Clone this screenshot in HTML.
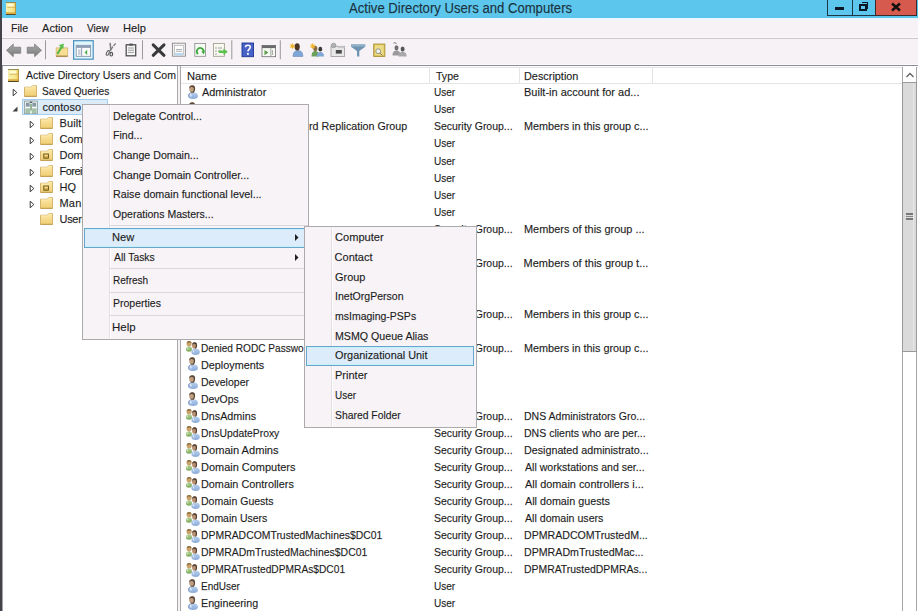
<!DOCTYPE html>
<html><head><meta charset="utf-8">
<style>
*{margin:0;padding:0;box-sizing:border-box}
html,body{width:918px;height:611px;overflow:hidden;background:#fff}
body{position:relative;font-family:"Liberation Sans",sans-serif;font-size:11px;color:#1e1e1e}
.a{position:absolute}
.t{position:absolute;white-space:nowrap;line-height:13px;transform-origin:0 50%;-webkit-text-stroke:0.25px rgba(20,20,20,0.5)}
svg.a{overflow:visible}
</style></head><body>
<svg width="0" height="0" style="position:absolute">
<defs>
<linearGradient id="gFold" x1="0" y1="0" x2="0" y2="1"><stop offset="0" stop-color="#fbe7a6"/><stop offset="1" stop-color="#f1cf74"/></linearGradient>
<linearGradient id="gRoot" x1="0" y1="0" x2="1" y2="0"><stop offset="0" stop-color="#f6f0b2"/><stop offset="0.6" stop-color="#f8e890"/><stop offset="1" stop-color="#f2cc60"/></linearGradient>
<linearGradient id="gGold" x1="0" y1="0" x2="0" y2="1"><stop offset="0" stop-color="#f6e9a0"/><stop offset="0.6" stop-color="#e3c663"/><stop offset="1" stop-color="#b89535"/></linearGradient>
<linearGradient id="gBlue" x1="0" y1="0" x2="0" y2="1"><stop offset="0" stop-color="#b8d0ee"/><stop offset="1" stop-color="#8aaad8"/></linearGradient>
<linearGradient id="gGreen" x1="0" y1="0" x2="0" y2="1"><stop offset="0" stop-color="#b4d296"/><stop offset="1" stop-color="#7aa65a"/></linearGradient>
<symbol id="user" viewBox="0 0 10 14">
 <path d="M0 11 C0 8.6 1.8 7.2 5 7.2 C8.2 7.2 10 8.6 10 11 C10 13 8.2 14 5 14 C1.8 14 0 13 0 11Z" fill="url(#gBlue)"/>
 <path d="M2.4 9 L3.2 11.5" stroke="#f0f6ff" stroke-width="1.1"/>
 <path d="M0.6 11.5 C0.5 9.8 1.2 8.6 2.2 8" fill="none" stroke="#7a88b8" stroke-width="0.8"/>
 <ellipse cx="4.1" cy="3.8" rx="3" ry="3.6" fill="#c0a080"/>
 <path d="M1.2 3.2 C1.2 0.9 2.6 0.2 4.2 0.2 C6.1 0.2 7.2 1.2 7.1 3.8 C7 5.6 6.6 7 5.4 7.6 L4.6 7.6 C5.6 6.2 6 4.8 5.6 3 C5 2 3.6 1.8 2.6 2.2 C2 2.4 1.5 2.8 1.2 3.2Z" fill="#5c4a3e"/>
 <path d="M2.6 7.2 L5.8 7.2" stroke="#4a3e36" stroke-width="0.9"/>
</symbol>
<symbol id="group" viewBox="0 0 15 14">
 <path d="M0 8.6 C0 6.4 1.2 5.3 3 5.3 C4.8 5.3 6 6.4 6 8.6 C6 10 5 10.8 3 10.8 C1 10.8 0 10 0 8.6Z" fill="url(#gGreen)"/>
 <path d="M1.3 6.5 L1.8 8.5" stroke="#e8f4d8" stroke-width="0.8"/>
 <ellipse cx="3.1" cy="2.8" rx="2.5" ry="2.7" fill="#c8a46c"/>
 <path d="M0.8 2.4 C0.8 0.8 1.8 0.1 3.1 0.1 C4.6 0.1 5.5 0.9 5.5 2.6 C5.2 1.6 4.4 1.3 3.2 1.4 C2 1.5 1.2 1.8 0.8 2.4Z" fill="#8a6a3c"/>
 <path d="M5.3 11 C5.3 8.8 7 7.6 9.6 7.6 C12.2 7.6 13.9 8.8 13.9 11 C13.9 13 12.2 14 9.6 14 C7 14 5.3 13 5.3 11Z" fill="url(#gBlue)"/>
 <path d="M7.2 9.3 L7.8 11.5" stroke="#f0f6ff" stroke-width="0.9"/>
 <ellipse cx="8.6" cy="4.5" rx="2.5" ry="3.2" fill="#b89070"/>
 <path d="M6.1 4 C6.1 2 7.2 1.2 8.6 1.2 C10.1 1.2 11.1 2.1 11 4.4 C10.9 5.8 10.6 7 9.6 7.6 L9 7.6 C9.8 6.4 10 5 9.7 3.6 C9.2 2.8 8.2 2.7 7.4 3 C6.8 3.3 6.4 3.6 6.1 4Z" fill="#4e3e34"/>
</symbol>
<symbol id="folder" viewBox="0 0 13 12">
 <path d="M0.5 2.2 L6.5 2.2 C7.6 2.2 8.2 0.6 9.3 0.6 L12.5 0.6 L12.5 11.5 L0.5 11.5 Z" fill="url(#gFold)" stroke="#cfae62" stroke-width="0.9"/>
 <path d="M1 2.9 L6.8 2.9 C7.9 2.9 8.5 1.3 9.6 1.3 L12 1.3" fill="none" stroke="#fff2c4" stroke-width="0.8"/>
 <rect x="0.5" y="10.8" width="12" height="0.8" fill="#b8964e"/>
</symbol>
<symbol id="oufolder" viewBox="0 0 13 12">
 <path d="M0.5 2.2 L6.5 2.2 C7.6 2.2 8.2 0.6 9.3 0.6 L12.5 0.6 L12.5 11.5 L0.5 11.5 Z" fill="url(#gFold)" stroke="#cfae62" stroke-width="0.9"/>
 <path d="M1 2.9 L6.8 2.9 C7.9 2.9 8.5 1.3 9.6 1.3 L12 1.3" fill="none" stroke="#fff2c4" stroke-width="0.8"/>
 <rect x="0.5" y="10.8" width="12" height="0.8" fill="#b8964e"/>
 <rect x="3.8" y="5" width="4.6" height="4.2" fill="#d4ac48" stroke="#5a4410" stroke-width="0.8"/>
 <rect x="4.6" y="5.8" width="3" height="1.2" fill="#f8e6a8"/>
</symbol>
<symbol id="tri" viewBox="0 0 6 9">
 <path d="M1.2 1.2 L4.8 4.5 L1.2 7.8 Z" fill="none" stroke="#3a3a3a" stroke-width="1"/>
</symbol>
<symbol id="trix" viewBox="0 0 6 6">
 <path d="M5.5 0.5 L5.5 5.5 L0.5 5.5 Z" fill="#404040"/>
</symbol>
<symbol id="domain" viewBox="0 0 14 14">
 <rect x="0.5" y="1" width="13" height="12.6" fill="#dfe9e2" stroke="#8a9ca4" stroke-width="0.8"/>
 <rect x="2" y="2.8" width="3.6" height="4" fill="#8797a6"/>
 <rect x="8.4" y="2.8" width="3.6" height="4" fill="#8797a6"/>
 <rect x="1.5" y="6.8" width="4.5" height="1.2" fill="#ffffff"/>
 <rect x="8" y="6.8" width="4.5" height="1.2" fill="#ffffff"/>
 <rect x="1.5" y="8.4" width="4.5" height="4.6" fill="#a6c2a8"/>
 <rect x="8" y="8.4" width="4.5" height="4.6" fill="#a6c2a8"/>
 <rect x="6.2" y="4" width="1.6" height="8" fill="#84a886"/>
 <rect x="6.2" y="10.5" width="1.6" height="3" fill="#e8f8e8"/>
 <rect x="5.8" y="1.6" width="2.4" height="1.4" fill="#4a5c6a"/>
</symbol>
<symbol id="root" viewBox="0 0 10 13" preserveAspectRatio="none">
 <rect x="0" y="0.3" width="10" height="12.4" fill="url(#gRoot)"/>
 <rect x="0" y="0" width="10" height="0.9" fill="#8c8446"/>
 <rect x="1.6" y="1.8" width="6" height="2.8" fill="#fffbd2"/>
 <rect x="1.2" y="4.8" width="7.8" height="0.8" fill="#cfae50"/>
 <rect x="0" y="10.2" width="10" height="1.8" fill="#dcae44"/>
 <rect x="0" y="12" width="10" height="1" fill="#4c4a22"/>
 <rect x="9" y="0.5" width="1" height="12" fill="#b89a40"/>
</symbol>
</defs></svg>
<div class="a" style="left:0px;top:0px;width:2px;height:611px;background:#434349"></div><div class="a" style="left:2px;top:0px;width:916px;height:18px;background:#5cc6ec"></div><svg class="a" style="left:6px;top:2px" width="10" height="13" viewBox="0 0 10 13"><use href="#root"/></svg><div class="t" style="left:349.00px;top:0px;font-size:14px;transform:scale(0.9370,1.0);font-size:14px;line-height:16px;color:#1d3646">Active Directory Users and Computers</div><div class="a" style="left:827px;top:0px;width:26px;height:16px;border:1px solid #1d3646;border-top:none;border-right:none"></div><div class="a" style="left:852px;top:0px;width:24px;height:16px;border:1px solid #1d3646;border-top:none;border-right:none"></div><div class="a" style="left:875px;top:0px;width:42px;height:16px;background:#d65a4e;border:1px solid #3a2a2a;border-top:none"></div><div class="a" style="left:835px;top:7px;width:9px;height:3px;background:#0b1826"></div><div class="a" style="left:859px;top:4px;width:8px;height:7px;border:2px solid #0b1826"></div><div class="a" style="left:862px;top:2px;width:6px;height:1px;background:#0b1826"></div><div class="a" style="left:867px;top:2px;width:1px;height:7px;background:#0b1826"></div><svg class="a" style="left:891px;top:3px" width="10" height="8"><path d="M1 0.5 L9 7.5 M9 0.5 L1 7.5" stroke="#111" stroke-width="2.4"/></svg><div class="a" style="left:2px;top:18px;width:916px;height:47px;background:#f6f2f6"></div><div class="a" style="left:2px;top:18px;width:916px;height:4px;background:linear-gradient(#e8f6fc,#f4f4fa 60%,#f7f2f5)"></div><div class="a" style="left:2px;top:37px;width:916px;height:1px;background:#fbf9fb"></div><div class="a" style="left:2px;top:38px;width:916px;height:1px;background:#cac6cc"></div><div class="t" style="left:10.84px;top:22px;font-size:11px;transform:scale(0.9625,1.0);">File</div><div class="t" style="left:42.00px;top:22px;font-size:11px;transform:scale(1.0100,1.0);">Action</div><div class="t" style="left:87.20px;top:22px;font-size:11px;transform:scale(0.9250,1.0);">View</div><div class="t" style="left:123.19px;top:22px;font-size:11px;transform:scale(1.0143,1.0);">Help</div><div class="a" style="left:2px;top:64px;width:916px;height:1px;background:#fdfcfd"></div><div class="a" style="left:2px;top:65px;width:916px;height:1px;background:#8e8c96"></div><svg class="a" style="left:0;top:38px" width="420" height="26" viewBox="0 38 420 26">
<defs>
<linearGradient id="gArr" x1="0" y1="0" x2="0" y2="1"><stop offset="0" stop-color="#a8a8a8"/><stop offset="1" stop-color="#7c7c7c"/></linearGradient>
</defs>
<!-- back -->
<path d="M6.5 50.3 L13.3 44 L13.3 47.2 L20.7 47.2 L20.7 53.3 L13.3 53.3 L13.3 56.7 Z" fill="url(#gArr)" stroke="#777" stroke-width="0.7" stroke-linejoin="round"/>
<!-- forward -->
<path d="M41.5 50.3 L34.6 44 L34.6 47.2 L27.2 47.2 L27.2 53.3 L34.6 53.3 L34.6 56.7 Z" fill="url(#gArr)" stroke="#777" stroke-width="0.7" stroke-linejoin="round"/>
<rect x="45" y="40.3" width="1" height="19" fill="#9a9a9a"/>
<!-- up folder -->
<path d="M56.2 47.8 L67.6 47.8 L67.6 56.6 L56.2 56.6 Z" fill="#f7de90" stroke="#c8a45a" stroke-width="0.6"/>
<rect x="56.2" y="55.6" width="11.4" height="1.1" fill="#9a7a40"/>
<path d="M57.8 53.2 L61.6 47" fill="none" stroke="#5ab84a" stroke-width="2.2" stroke-linecap="round"/>
<path d="M58.6 45.2 L63.8 43.6 L63.4 49 Z" fill="#5cc050"/>
<!-- highlighted button -->
<rect x="73.6" y="40.7" width="19.6" height="18.5" fill="#e0f6fd" stroke="#4a90bc" stroke-width="1.2"/>
<rect x="76.2" y="45.3" width="14.4" height="11" fill="#fbfbfb" stroke="#7a8ca4" stroke-width="0.8"/>
<rect x="76.2" y="45.3" width="14.4" height="2.6" fill="#8d9db3"/>
<rect x="78" y="49.5" width="2.5" height="5.5" fill="#c8d0d8"/>
<rect x="81.3" y="48" width="0.8" height="8.2" fill="#7a8ca4"/>
<path d="M87.2 49.8 L84.5 52.4 L87.2 55 Z" fill="#4cae4c"/>
<!-- scissors -->
<path d="M110.1 42.8 L110.9 50.5" stroke="#7c7c7c" stroke-width="1.5"/>
<path d="M115.6 43.4 L109.6 51" stroke="#7c7c7c" stroke-width="1.3"/>
<circle cx="113.4" cy="46.5" r="0.7" fill="#f4f4f4"/>
<ellipse cx="107.8" cy="52.9" rx="1.2" ry="2.5" transform="rotate(25 107.8 52.9)" fill="none" stroke="#646464" stroke-width="1.1"/>
<ellipse cx="111.3" cy="54.2" rx="1.3" ry="1.8" fill="none" stroke="#555" stroke-width="1.2"/>
<!-- clipboard -->
<rect x="126.2" y="44.8" width="9.5" height="11" fill="#f4f4f4" stroke="#505050" stroke-width="1.3"/>
<rect x="129.2" y="43.6" width="3.6" height="2" fill="#505050"/>
<path d="M128 48 H134 M128 50.2 H134 M128 52.4 H134" stroke="#8a8a8a" stroke-width="0.8"/>
<rect x="142" y="40.3" width="1" height="19" fill="#9a9a9a"/>
<!-- delete X -->
<path d="M153.2 44.8 L164 55.3 M164 44.8 L153.2 55.3" stroke="#3a3a3a" stroke-width="3" stroke-linecap="round"/>
<!-- properties -->
<rect x="172.4" y="43.2" width="13" height="13" fill="#f0f0f0" stroke="#8a8a8a" stroke-width="0.9"/>
<rect x="174.5" y="45.5" width="8.8" height="8.8" fill="#fdfdfd" stroke="#b0b0b0" stroke-width="0.7"/>
<path d="M176 49.5 H182 M176 51.3 H182" stroke="#909090" stroke-width="0.7"/>
<rect x="175" y="53" width="8" height="2.5" fill="#bcd8ee"/>
<!-- refresh -->
<rect x="194.8" y="43.5" width="10.8" height="12.8" fill="#f6fbf4" stroke="#8a8a8a" stroke-width="0.8"/>
<path d="M198 54 A3.4 3.4 0 1 1 203.2 53" fill="none" stroke="#3aa83a" stroke-width="1.7"/>
<path d="M201.4 51.5 L204.5 50.8 L204 54.5 Z" fill="#3aa83a"/>
<!-- export -->
<rect x="213.4" y="43.5" width="11" height="12.8" fill="#f8f8f0" stroke="#9a9a8a" stroke-width="0.8"/>
<path d="M215.5 48 h1 M215.5 51 h1 M215.5 54 h1" stroke="#555" stroke-width="1"/>
<path d="M218 48 H222 M218 51 H221" stroke="#888" stroke-width="0.8"/>
<path d="M218.8 50.4 H223.5 V48.5 L227.8 51.7 L223.5 54.9 V53 H218.8 Z" fill="#5cc04c"/>
<rect x="231.3" y="40.3" width="1" height="19" fill="#9a9a9a"/>
<!-- help -->
<rect x="242" y="43" width="11.5" height="13.7" fill="#4862c8" stroke="#1e3490" stroke-width="0.9"/>
<path d="M245.5 47.2 C245.5 44.5 250.3 44.5 250.3 47.2 C250.3 49 247.9 49.3 247.9 51.6" fill="none" stroke="#fff" stroke-width="1.5"/>
<rect x="247" y="53" width="1.8" height="1.8" fill="#fff"/>
<!-- console -->
<rect x="262" y="45.4" width="13.6" height="11.3" fill="#f6faf2" stroke="#6e6e6e" stroke-width="0.8"/>
<rect x="262" y="45.4" width="13.6" height="2.7" fill="#6a6a6a"/>
<path d="M264.5 50 L268.3 52.6 L264.5 55.2 Z" fill="#5a9a4a"/>
<rect x="270.5" y="48.3" width="0.8" height="8" fill="#8a8a8a"/>
<path d="M272.5 50 V55" stroke="#999" stroke-width="0.8"/>
<rect x="279.8" y="40.3" width="1" height="19" fill="#9a9a9a"/>
<!-- new user -->
<path d="M293 56.5 C293 52.5 295 50.5 298 50.5 C301 50.5 303 52.5 302.8 56.5 Z" fill="#7ea6d6" stroke="#5a7fae" stroke-width="0.5"/>
<ellipse cx="297.2" cy="46.8" rx="2.6" ry="3.6" fill="#4a3424"/>
<path d="M292.3 42.8 L293 45 L295.2 44.2 L293.8 46 L295.5 47.6 L293.2 47.4 L292.6 49.5 L291.6 47.4 L289.6 47.8 L291 46 L289.6 44.3 L291.6 44.8 Z" fill="#f4b428"/>
<!-- new group -->
<path d="M311.5 56.5 C311.5 52.8 313 51 315.3 51 C317.6 51 319.2 52.8 319 56.5 Z" fill="#6aa05a"/>
<ellipse cx="315.3" cy="48.5" rx="2" ry="2.8" fill="#8a6a40"/>
<path d="M316.6 56.6 C316.6 53.5 318 52 320.3 52 C322.6 52 324.2 53.5 324 56.6 Z" fill="#7ea6d6"/>
<ellipse cx="320.3" cy="49.2" rx="1.9" ry="2.4" fill="#3a3a34"/>
<path d="M312.6 42.8 L313.3 45 L315.5 44.2 L314.1 46 L315.8 47.6 L313.5 47.4 L312.9 49.5 L311.9 47.4 L309.9 47.8 L311.3 46 L309.9 44.3 L311.9 44.8 Z" fill="#f4b428"/>
<!-- new OU -->
<rect x="331" y="46.3" width="13.6" height="10.2" fill="#e8e8e8" stroke="#9a9a9a" stroke-width="0.8"/>
<rect x="335.8" y="50" width="6" height="3.6" fill="#4a4a4a"/>
<rect x="338" y="46.3" width="6.6" height="1.8" fill="#c8c8c8"/>
<circle cx="333.6" cy="45.5" r="2.3" fill="#b0b0b0" stroke="#8a8a8a" stroke-width="0.6"/>
<!-- filter -->
<path d="M351 44.4 H365.2 V46.8 L359.3 51 V56.5 H357 V51 L351 46.8 Z" fill="#6f94b2"/>
<rect x="351" y="44.4" width="14.2" height="2.2" fill="#8fb0c8"/>
<!-- find -->
<rect x="373.7" y="44" width="11.2" height="12.5" fill="#dcc15a" stroke="#a48a2a" stroke-width="0.8"/>
<rect x="375" y="45.2" width="8.6" height="10" fill="#eedc88"/>
<circle cx="378.2" cy="51.2" r="2.4" fill="#f4f4f4" stroke="#8a8a7a" stroke-width="0.9"/>
<path d="M380 53 L382.5 55.5" stroke="#7a7a6a" stroke-width="1"/>
<!-- add to group -->
<path d="M392.5 55.5 C392.5 52 394 50.5 396.5 50.5 C399 50.5 400.5 52 400.3 55.5 Z" fill="#9a9a9a"/>
<ellipse cx="396.5" cy="47.8" rx="2" ry="2.6" fill="#707070"/>
<path d="M398.5 56.5 C398.5 53.3 400 51.8 402.6 51.8 C405.2 51.8 406.7 53.3 406.6 56.5 Z" fill="#a8a8a8"/>
<ellipse cx="402.6" cy="49" rx="2" ry="2.5" fill="#555"/>
<path d="M393.5 43 C394.5 42.5 396 42.8 396.5 44" fill="none" stroke="#777" stroke-width="1"/>
</svg><div class="a" style="left:2px;top:66px;width:1px;height:545px;background:#a4a4aa"></div><div class="a" style="left:177px;top:66px;width:1px;height:545px;background:#a9a9a9"></div><div class="a" style="left:178px;top:66px;width:2px;height:545px;background:#f5f1f5"></div><div class="a" style="left:180px;top:66px;width:1px;height:545px;background:#a9a9a9"></div><svg class="a" style="left:8px;top:69px" width="11" height="13" viewBox="0 0 11 13"><use href="#root"/></svg><div class="t" style="left:25.50px;top:69px;font-size:11px;transform:scale(0.9583,1.0);">Active Directory Users and Com</div><svg class="a" style="left:12px;top:88px" width="6" height="9" viewBox="0 0 6 9"><use href="#tri"/></svg><svg class="a" style="left:23.5px;top:85px" width="13" height="12" viewBox="0 0 13 12"><use href="#folder"/></svg><div class="t" style="left:41.88px;top:85px;font-size:11px;transform:scale(0.9239,1.0);">Saved Queries</div><div class="a" style="left:22px;top:99px;width:86px;height:16px;background:#dcebf8;border:1px solid #a5cdee"></div><svg class="a" style="left:12px;top:106px" width="6" height="6" viewBox="0 0 6 6"><use href="#trix"/></svg><svg class="a" style="left:24px;top:100px" width="14" height="14" viewBox="0 0 14 14"><use href="#domain"/></svg><div class="t" style="left:42.5px;top:101px;font-size:11px;">contoso</div><svg class="a" style="left:29px;top:120px" width="6" height="9" viewBox="0 0 6 9"><use href="#tri"/></svg><svg class="a" style="left:40px;top:117px" width="13" height="12" viewBox="0 0 13 12"><use href="#folder"/></svg><div class="t" style="left:59.5px;top:117px;font-size:11px;letter-spacing:0.1px">Built</div><svg class="a" style="left:29px;top:136px" width="6" height="9" viewBox="0 0 6 9"><use href="#tri"/></svg><svg class="a" style="left:40px;top:133px" width="13" height="12" viewBox="0 0 13 12"><use href="#folder"/></svg><div class="t" style="left:59.5px;top:133px;font-size:11px;">Com</div><svg class="a" style="left:29px;top:152px" width="6" height="9" viewBox="0 0 6 9"><use href="#tri"/></svg><svg class="a" style="left:40px;top:149px" width="13" height="12" viewBox="0 0 13 12"><use href="#oufolder"/></svg><div class="t" style="left:59.5px;top:149px;font-size:11px;">Dom</div><svg class="a" style="left:29px;top:168px" width="6" height="9" viewBox="0 0 6 9"><use href="#tri"/></svg><svg class="a" style="left:40px;top:165px" width="13" height="12" viewBox="0 0 13 12"><use href="#folder"/></svg><div class="t" style="left:59.5px;top:165px;font-size:11px;letter-spacing:-0.5px">Forei</div><svg class="a" style="left:29px;top:184px" width="6" height="9" viewBox="0 0 6 9"><use href="#tri"/></svg><svg class="a" style="left:40px;top:181px" width="13" height="12" viewBox="0 0 13 12"><use href="#oufolder"/></svg><div class="t" style="left:59.5px;top:181px;font-size:11px;">HQ</div><svg class="a" style="left:29px;top:200px" width="6" height="9" viewBox="0 0 6 9"><use href="#tri"/></svg><svg class="a" style="left:40px;top:197px" width="13" height="12" viewBox="0 0 13 12"><use href="#folder"/></svg><div class="t" style="left:59.5px;top:197px;font-size:11px;letter-spacing:0.2px">Man</div><svg class="a" style="left:40px;top:213px" width="13" height="12" viewBox="0 0 13 12"><use href="#folder"/></svg><div class="t" style="left:59.5px;top:213px;font-size:11px;letter-spacing:-0.3px">Users</div><div class="a" style="left:181px;top:66px;width:721px;height:17px;background:#fff"></div><div class="a" style="left:181px;top:67px;width:737px;height:1px;background:#e3e1e7"></div><div class="a" style="left:181px;top:83px;width:721px;height:1px;background:#e5e5e5"></div><div class="a" style="left:429px;top:67px;width:1px;height:16px;background:#e5e5e5"></div><div class="a" style="left:519px;top:67px;width:1px;height:16px;background:#e5e5e5"></div><div class="a" style="left:652px;top:67px;width:1px;height:16px;background:#e5e5e5"></div><div class="t" style="left:186.59px;top:70px;font-size:11px;transform:scale(1.0143,1.0);">Name</div><div class="t" style="left:435.60px;top:70px;font-size:11px;transform:scale(0.9609,1.0);">Type</div><div class="t" style="left:523.81px;top:70px;font-size:11px;transform:scale(0.9887,1.0);">Description</div><svg class="a" style="left:188px;top:85.0px" width="10" height="14" viewBox="0 0 10 14"><use href="#user"/></svg><div class="t" style="left:202.10px;top:86px;font-size:11px;transform:scale(0.9923,1.0);">Administrator</div><div class="t" style="left:434.29px;top:86px;font-size:11px;transform:scale(0.9136,1.0);">User</div><div class="t" style="left:523.60px;top:86px;font-size:11px;transform:scale(0.9991,1.0);">Built-in account for ad...</div><svg class="a" style="left:188px;top:102.03px" width="10" height="14" viewBox="0 0 10 14"><use href="#user"/></svg><div class="t" style="left:434.29px;top:103px;font-size:11px;transform:scale(0.9136,1.0);">User</div><svg class="a" style="left:186px;top:119.86px" width="15" height="14" viewBox="0 0 15 14"><use href="#group"/></svg><div class="t" style="left:308.63px;top:120px;font-size:11px;transform:scale(0.9737,1.0);">rd Replication Group</div><div class="t" style="left:434.25px;top:120px;font-size:11px;transform:scale(0.9519,1.0);">Security Group...</div><div class="t" style="left:523.62px;top:120px;font-size:11px;transform:scale(0.9840,1.0);">Members in this group c...</div><svg class="a" style="left:188px;top:136.09px" width="10" height="14" viewBox="0 0 10 14"><use href="#user"/></svg><div class="t" style="left:434.29px;top:137px;font-size:11px;transform:scale(0.9136,1.0);">User</div><svg class="a" style="left:188px;top:153.12px" width="10" height="14" viewBox="0 0 10 14"><use href="#user"/></svg><div class="t" style="left:434.29px;top:155px;font-size:11px;transform:scale(0.9136,1.0);">User</div><svg class="a" style="left:188px;top:170.15px" width="10" height="14" viewBox="0 0 10 14"><use href="#user"/></svg><div class="t" style="left:434.29px;top:172px;font-size:11px;transform:scale(0.9136,1.0);">User</div><svg class="a" style="left:188px;top:187.18px" width="10" height="14" viewBox="0 0 10 14"><use href="#user"/></svg><div class="t" style="left:434.29px;top:189px;font-size:11px;transform:scale(0.9136,1.0);">User</div><svg class="a" style="left:188px;top:204.21px" width="10" height="14" viewBox="0 0 10 14"><use href="#user"/></svg><div class="t" style="left:434.29px;top:206px;font-size:11px;transform:scale(0.9136,1.0);">User</div><svg class="a" style="left:186px;top:222.04px" width="15" height="14" viewBox="0 0 15 14"><use href="#group"/></svg><div class="t" style="left:434.25px;top:223px;font-size:11px;transform:scale(0.9519,1.0);">Security Group...</div><div class="t" style="left:523.61px;top:223px;font-size:11px;transform:scale(0.9908,1.0);">Members of this group ...</div><svg class="a" style="left:188px;top:238.27px" width="10" height="14" viewBox="0 0 10 14"><use href="#user"/></svg><div class="t" style="left:434.29px;top:240px;font-size:11px;transform:scale(0.9136,1.0);">User</div><svg class="a" style="left:186px;top:256.1px" width="15" height="14" viewBox="0 0 15 14"><use href="#group"/></svg><div class="t" style="left:434.25px;top:257px;font-size:11px;transform:scale(0.9519,1.0);">Security Group...</div><div class="t" style="left:523.60px;top:257px;font-size:11px;transform:scale(1.0000,1.0);">Members of this group t...</div><svg class="a" style="left:188px;top:272.33px" width="10" height="14" viewBox="0 0 10 14"><use href="#user"/></svg><div class="t" style="left:434.29px;top:274px;font-size:11px;transform:scale(0.9136,1.0);">User</div><svg class="a" style="left:188px;top:289.36px" width="10" height="14" viewBox="0 0 10 14"><use href="#user"/></svg><div class="t" style="left:434.29px;top:291px;font-size:11px;transform:scale(0.9136,1.0);">User</div><svg class="a" style="left:186px;top:307.19px" width="15" height="14" viewBox="0 0 15 14"><use href="#group"/></svg><div class="t" style="left:434.25px;top:308px;font-size:11px;transform:scale(0.9519,1.0);">Security Group...</div><div class="t" style="left:523.62px;top:308px;font-size:11px;transform:scale(0.9840,1.0);">Members in this group c...</div><svg class="a" style="left:188px;top:323.42px" width="10" height="14" viewBox="0 0 10 14"><use href="#user"/></svg><div class="t" style="left:434.29px;top:325px;font-size:11px;transform:scale(0.9136,1.0);">User</div><svg class="a" style="left:186px;top:341.25px" width="15" height="14" viewBox="0 0 15 14"><use href="#group"/></svg><div class="t" style="left:201.18px;top:342px;font-size:11px;transform:scale(0.9173,1.0);">Denied RODC Passwo</div><div class="t" style="left:434.25px;top:342px;font-size:11px;transform:scale(0.9519,1.0);">Security Group...</div><div class="t" style="left:523.62px;top:342px;font-size:11px;transform:scale(0.9840,1.0);">Members in this group c...</div><svg class="a" style="left:188px;top:357.48px" width="10" height="14" viewBox="0 0 10 14"><use href="#user"/></svg><div class="t" style="left:201.12px;top:359px;font-size:11px;transform:scale(0.9825,1.0);">Deployments</div><div class="t" style="left:434.29px;top:359px;font-size:11px;transform:scale(0.9136,1.0);">User</div><svg class="a" style="left:188px;top:374.51px" width="10" height="14" viewBox="0 0 10 14"><use href="#user"/></svg><div class="t" style="left:201.14px;top:376px;font-size:11px;transform:scale(0.9571,1.0);">Developer</div><div class="t" style="left:434.29px;top:376px;font-size:11px;transform:scale(0.9136,1.0);">User</div><svg class="a" style="left:188px;top:391.54px" width="10" height="14" viewBox="0 0 10 14"><use href="#user"/></svg><div class="t" style="left:201.15px;top:393px;font-size:11px;transform:scale(0.9500,1.0);">DevOps</div><div class="t" style="left:434.29px;top:393px;font-size:11px;transform:scale(0.9136,1.0);">User</div><svg class="a" style="left:186px;top:409.37px" width="15" height="14" viewBox="0 0 15 14"><use href="#group"/></svg><div class="t" style="left:201.12px;top:410px;font-size:11px;transform:scale(0.9782,1.0);">DnsAdmins</div><div class="t" style="left:434.25px;top:410px;font-size:11px;transform:scale(0.9519,1.0);">Security Group...</div><div class="t" style="left:523.64px;top:410px;font-size:11px;transform:scale(0.9568,1.0);">DNS Administrators Gro...</div><svg class="a" style="left:186px;top:426.4px" width="15" height="14" viewBox="0 0 15 14"><use href="#group"/></svg><div class="t" style="left:201.16px;top:427px;font-size:11px;transform:scale(0.9415,1.0);">DnsUpdateProxy</div><div class="t" style="left:434.25px;top:427px;font-size:11px;transform:scale(0.9519,1.0);">Security Group...</div><div class="t" style="left:523.64px;top:427px;font-size:11px;transform:scale(0.9568,1.0);">DNS clients who are per...</div><svg class="a" style="left:186px;top:443.43px" width="15" height="14" viewBox="0 0 15 14"><use href="#group"/></svg><div class="t" style="left:201.09px;top:444px;font-size:11px;transform:scale(1.0066,1.0);">Domain Admins</div><div class="t" style="left:434.25px;top:444px;font-size:11px;transform:scale(0.9519,1.0);">Security Group...</div><div class="t" style="left:523.62px;top:444px;font-size:11px;transform:scale(0.9754,1.0);">Designated administrato...</div><svg class="a" style="left:186px;top:460.46px" width="15" height="14" viewBox="0 0 15 14"><use href="#group"/></svg><div class="t" style="left:201.10px;top:461px;font-size:11px;transform:scale(0.9968,1.0);">Domain Computers</div><div class="t" style="left:434.25px;top:461px;font-size:11px;transform:scale(0.9519,1.0);">Security Group...</div><div class="t" style="left:524.60px;top:461px;font-size:11px;transform:scale(0.9589,1.0);">All workstations and ser...</div><svg class="a" style="left:186px;top:477.49px" width="15" height="14" viewBox="0 0 15 14"><use href="#group"/></svg><div class="t" style="left:201.11px;top:478px;font-size:11px;transform:scale(0.9860,1.0);">Domain Controllers</div><div class="t" style="left:434.25px;top:478px;font-size:11px;transform:scale(0.9519,1.0);">Security Group...</div><div class="t" style="left:524.60px;top:478px;font-size:11px;transform:scale(0.9908,1.0);">All domain controllers i...</div><svg class="a" style="left:186px;top:494.52px" width="15" height="14" viewBox="0 0 15 14"><use href="#group"/></svg><div class="t" style="left:201.14px;top:495px;font-size:11px;transform:scale(0.9568,1.0);">Domain Guests</div><div class="t" style="left:434.25px;top:495px;font-size:11px;transform:scale(0.9519,1.0);">Security Group...</div><div class="t" style="left:524.60px;top:495px;font-size:11px;transform:scale(0.9779,1.0);">All domain guests</div><svg class="a" style="left:186px;top:511.55px" width="15" height="14" viewBox="0 0 15 14"><use href="#group"/></svg><div class="t" style="left:201.15px;top:512px;font-size:11px;transform:scale(0.9515,1.0);">Domain Users</div><div class="t" style="left:434.25px;top:512px;font-size:11px;transform:scale(0.9519,1.0);">Security Group...</div><div class="t" style="left:524.60px;top:512px;font-size:11px;transform:scale(0.9642,1.0);">All domain users</div><svg class="a" style="left:186px;top:528.58px" width="15" height="14" viewBox="0 0 15 14"><use href="#group"/></svg><div class="t" style="left:201.15px;top:529px;font-size:11px;transform:scale(0.9468,1.0);">DPMRADCOMTrustedMachines$DC01</div><div class="t" style="left:434.25px;top:529px;font-size:11px;transform:scale(0.9519,1.0);">Security Group...</div><div class="t" style="left:523.64px;top:529px;font-size:11px;transform:scale(0.9630,1.0);">DPMRADCOMTrustedM...</div><svg class="a" style="left:186px;top:545.61px" width="15" height="14" viewBox="0 0 15 14"><use href="#group"/></svg><div class="t" style="left:201.15px;top:546px;font-size:11px;transform:scale(0.9503,1.0);">DPMRADmTrustedMachines$DC01</div><div class="t" style="left:434.25px;top:546px;font-size:11px;transform:scale(0.9519,1.0);">Security Group...</div><div class="t" style="left:523.63px;top:546px;font-size:11px;transform:scale(0.9664,1.0);">DPMRADmTrustedMac...</div><svg class="a" style="left:186px;top:562.64px" width="15" height="14" viewBox="0 0 15 14"><use href="#group"/></svg><div class="t" style="left:201.17px;top:563px;font-size:11px;transform:scale(0.9279,1.0);">DPMRATrustedDPMRAs$DC01</div><div class="t" style="left:434.25px;top:563px;font-size:11px;transform:scale(0.9519,1.0);">Security Group...</div><div class="t" style="left:523.65px;top:563px;font-size:11px;transform:scale(0.9469,1.0);">DPMRATrustedDPMRAs...</div><svg class="a" style="left:188px;top:578.87px" width="10" height="14" viewBox="0 0 10 14"><use href="#user"/></svg><div class="t" style="left:201.19px;top:580px;font-size:11px;transform:scale(0.9095,1.0);">EndUser</div><div class="t" style="left:434.29px;top:580px;font-size:11px;transform:scale(0.9136,1.0);">User</div><svg class="a" style="left:188px;top:595.9px" width="10" height="14" viewBox="0 0 10 14"><use href="#user"/></svg><div class="t" style="left:201.13px;top:597px;font-size:11px;transform:scale(0.9737,1.0);">Engineering</div><div class="t" style="left:434.29px;top:597px;font-size:11px;transform:scale(0.9136,1.0);">User</div><div class="a" style="left:902px;top:67px;width:15px;height:544px;background:#fff;border-left:1px solid #a6a6a6;border-right:1px solid #a6a6a6"></div><svg class="a" style="left:905px;top:71px" width="10" height="8"><path d="M1.5 6 L5 2.5 L8.5 6" fill="none" stroke="#606060" stroke-width="1.3"/></svg><div class="a" style="left:902px;top:82px;width:15px;height:270px;background:#dadada;border:1px solid #9a9a9a"></div><div class="a" style="left:913px;top:83px;width:1px;height:268px;background:#e6e6e6"></div><div class="a" style="left:906px;top:213px;width:7px;height:2px;background:#777"></div><div class="a" style="left:906px;top:216px;width:7px;height:1px;background:#888"></div><div class="a" style="left:906px;top:218px;width:7px;height:2px;background:#777"></div><div class="a" style="left:82px;top:104px;width:227px;height:236px;background:#f7f3f7;border:1px solid #ababab"></div><div class="a" style="left:109px;top:105px;width:1px;height:233px;background:#e2dee2"></div><div class="a" style="left:110px;top:105px;width:1px;height:233px;background:#fff"></div><div class="t" style="left:112.53px;top:110px;font-size:11px;transform:scale(0.9700,1.0);">Delegate Control...</div><div class="t" style="left:112.54px;top:129px;font-size:11px;transform:scale(0.9621,1.0);">Find...</div><div class="t" style="left:112.53px;top:149px;font-size:11px;transform:scale(0.9667,1.0);">Change Domain...</div><div class="t" style="left:112.52px;top:169px;font-size:11px;transform:scale(0.9818,1.0);">Change Domain Controller...</div><div class="t" style="left:112.52px;top:188px;font-size:11px;transform:scale(0.9760,1.0);">Raise domain functional level...</div><div class="t" style="left:112.54px;top:208px;font-size:11px;transform:scale(0.9563,1.0);">Operations Masters...</div><div class="a" style="left:84px;top:228px;width:221px;height:20px;background:#dcecfa;border:1px solid #66a6cc;box-shadow:inset 0 1px 0 #c6f0fb,inset 0 -1px 0 #c6f0fb"></div><div class="t" style="left:112.49px;top:231px;font-size:11px;transform:scale(1.0095,1.0);">New</div><div class="t" style="left:113.50px;top:251px;font-size:11px;transform:scale(0.9419,1.0);">All Tasks</div><div class="t" style="left:112.59px;top:274px;font-size:11px;transform:scale(0.9135,1.0);">Refresh</div><div class="t" style="left:112.54px;top:297px;font-size:11px;transform:scale(0.9551,1.0);">Properties</div><div class="t" style="left:112.46px;top:321px;font-size:11px;transform:scale(1.0429,1.0);">Help</div><div class="a" style="left:110px;top:225px;width:198px;height:1px;background:#dcd8dc"></div><div class="a" style="left:110px;top:268px;width:198px;height:1px;background:#dcd8dc"></div><div class="a" style="left:110px;top:292px;width:198px;height:1px;background:#dcd8dc"></div><div class="a" style="left:110px;top:315px;width:198px;height:1px;background:#dcd8dc"></div><svg class="a" style="left:295px;top:233.5px" width="4" height="7"><path d="M0 0 L3.5 3.5 L0 7Z" fill="#202020"/></svg><svg class="a" style="left:295px;top:253.5px" width="4" height="7"><path d="M0 0 L3.5 3.5 L0 7Z" fill="#202020"/></svg><div class="a" style="left:304px;top:226px;width:173px;height:202px;background:#f7f3f7;border:1px solid #ababab"></div><div class="a" style="left:331px;top:227px;width:1px;height:199px;background:#e2dee2"></div><div class="a" style="left:332px;top:227px;width:1px;height:199px;background:#fff"></div><div class="t" style="left:334.59px;top:231px;font-size:11px;transform:scale(1.0085,1.0);">Computer</div><div class="t" style="left:334.60px;top:251px;font-size:11px;transform:scale(1.0000,1.0);">Contact</div><div class="t" style="left:334.61px;top:271px;font-size:11px;transform:scale(0.9931,1.0);">Group</div><div class="t" style="left:334.64px;top:290px;font-size:11px;transform:scale(0.9586,1.0);">InetOrgPerson</div><div class="t" style="left:334.65px;top:310px;font-size:11px;transform:scale(0.9548,1.0);">msImaging-PSPs</div><div class="t" style="left:334.63px;top:330px;font-size:11px;transform:scale(0.9674,1.0);">MSMQ Queue Alias</div><div class="a" style="left:306px;top:346px;width:168px;height:20px;background:#dcecfa;border:1px solid #66a6cc;box-shadow:inset 0 1px 0 #c6f0fb,inset 0 -1px 0 #c6f0fb"></div><div class="t" style="left:334.61px;top:349px;font-size:11px;transform:scale(0.9891,1.0);">Organizational Unit</div><div class="t" style="left:334.60px;top:369px;font-size:11px;transform:scale(1.0032,1.0);">Printer</div><div class="t" style="left:334.70px;top:389px;font-size:11px;transform:scale(0.9045,1.0);">User</div><div class="t" style="left:334.66px;top:409px;font-size:11px;transform:scale(0.9426,1.0);">Shared Folder</div>
</body></html>
